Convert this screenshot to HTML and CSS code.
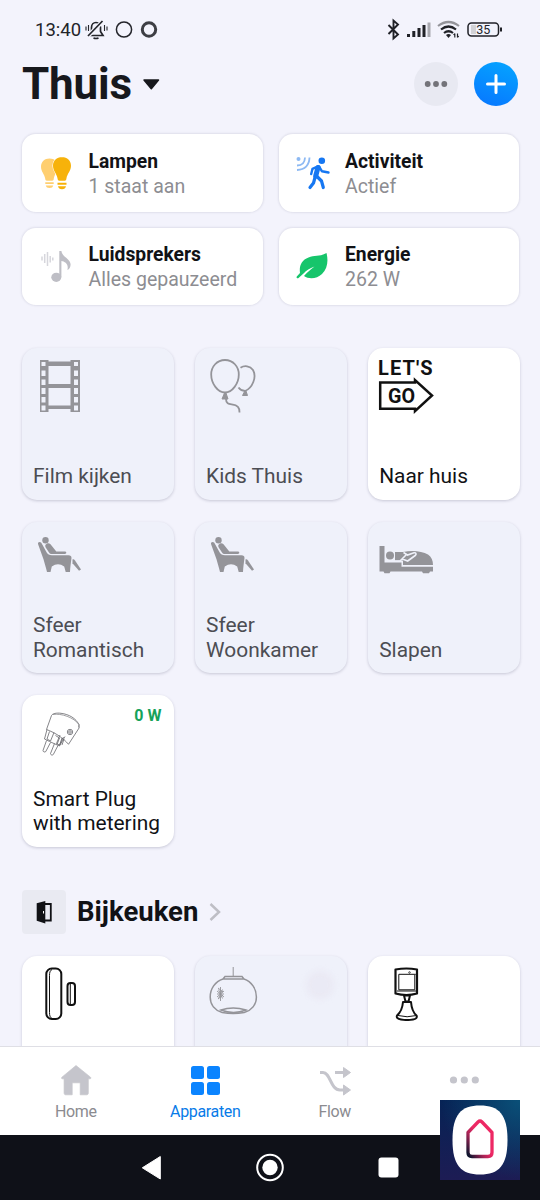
FILE: index.html
```html
<!DOCTYPE html>
<html lang="nl">
<head>
<meta charset="utf-8">
<title>Thuis</title>
<link rel="stylesheet" href="styles.css">
</head>
<body>
<div class="phone">
  <div class="status-bar">
    <span class="clock">13:40</span>
    <svg class="status-left" width="76" height="24" viewBox="84 18 76 24" fill="none" stroke="#24252b">
      <path d="M89.500 35.500h13.500l-2.500-4v-4c0-3-2-5-4.500-5s-4.500 2-4.500 5v4z" stroke-width="1.700"/>
      <path d="M86.500 37.500l17-17" stroke="#f3f3fc" stroke-width="4"/>
      <path d="M88 36l14.500-15" stroke-width="1.700"/>
      <path d="M93.500 38q2.500 1 5 0" stroke-width="1.700"/>
      <path d="M86 26.500v4M88.500 25v6M104.500 25v6M107 26.500v4" stroke-width="1.100"/>
      <circle cx="124" cy="29.500" r="7.600" stroke-width="1.500"/>
      <circle cx="149" cy="29.500" r="6.700" stroke="#3d3e44" stroke-width="3"/>
    </svg>
    <svg class="status-right" width="118" height="24" viewBox="386 18 118 24" fill="none" stroke="#202127">
      <path d="M388.500 25l9.500 9.500-4.500 4V20.500l4.500 4-9.500 9.500" stroke-width="1.900"/>
      <g stroke-width="3"><path d="M408.500 34v3M413.800 31v6M419 28v9M424 25v12"/><path d="M429 22.500V37" stroke="#a9a9b0"/></g>
      <path d="M438 26q10.500-8 21 0" stroke="#94949a" stroke-width="2.200"/>
      <path d="M441 29.500q7.500-6 15 0M444 33q4.500-3.500 9 0" stroke-width="2.200"/>
      <path d="M446 35q2.500-2 5 0l-2.500 3z" fill="#202127" stroke="none"/>
      <path d="M454.800 37.500v-4m-1.200 1.500l1.200-1.500M457.500 33.500v4m1.200-1.500l-1.200 1.500" stroke-width="1.200"/>
      <rect x="468" y="23" width="30.500" height="13" rx="3.500" stroke-width="1.500"/>
      <path d="M471 25h5v9h-5z" fill="#d2d2d7" stroke="none"/>
      <path d="M501 27.500v4" stroke-width="2"/>
      <text x="483.300" y="34" class="battery-text">35</text>
    </svg>
  </div>

  <header class="header">
    <h1 class="title">Thuis</h1>
    <svg class="caret" width="18" height="12" viewBox="142 78 18 12"><path d="M144 80h14.500l-7.200 8.700z" fill="#17181d" stroke="#17181d" stroke-width="1.500" stroke-linejoin="round"/></svg>
    <button class="round-button more" aria-label="Meer"><svg width="24" height="8" viewBox="0 0 24 8" fill="#737379"><circle cx="3.700" cy="4" r="2.900"/><circle cx="12" cy="4" r="2.900"/><circle cx="20.300" cy="4" r="2.900"/></svg></button>
    <button class="round-button add" aria-label="Toevoegen"><svg width="22" height="22" viewBox="0 0 22 22" stroke="#fff" stroke-width="3" stroke-linecap="round"><path d="M11 2.500v17M2.500 11h17"/></svg></button>
  </header>

  <main class="content">
    <section class="summary">
      <article class="summary-card">
        <svg class="summary-icon" width="36" height="36" viewBox="38 155 36 36">
          <path fill="#ffcf70" d="M49.500 158.500c-5 0-8.500 3.500-8.500 8.200 0 5 3.500 7 4.300 12.300 0 1 .6 1.700 1.500 1.700h5.400c.9 0 1.500-.7 1.500-1.700.8-5.300 4.300-7.300 4.300-12.300 0-4.700-3.500-8.200-8.500-8.200zM45.300 182.300h8.400v1.800h-8.400zM45.800 185.500h7.400q-.5 2.500-3.700 2.500t-3.700-2.500z"/>
          <path d="M62 157c-5.300 0-9 3.500-9 8.700 0 5.300 3.700 7.500 4.600 13 .1 1.300.7 2 1.600 2h5.600c.9 0 1.500-.7 1.600-2 .9-5.500 4.600-7.700 4.600-13 0-5.200-3.700-8.700-9-8.700zM57.500 182.800h9v2h-9zM58 186.300h8q-.6 3-4 3t-4-3z" fill="#f7b20a" stroke="#fff" stroke-width="1.200" paint-order="stroke"/>
        </svg>
        <div class="summary-copy"><h2>Lampen</h2><p>1 staat aan</p></div>
      </article>
      <article class="summary-card">
        <svg class="summary-icon" width="36" height="36" viewBox="294.500 155 36 36" fill="none">
          <g stroke="#8db9f3" stroke-width="1.800"><path d="M309 157.500q-.5 12-12.500 12.500M304.500 157.500q-.3 8-8 8"/></g><circle cx="298" cy="159" r="2" fill="#8db9f3"/>
          <circle cx="321.300" cy="160.700" r="3.300" fill="#1677f2"/>
          <g stroke="#1677f2" stroke-linecap="round" stroke-linejoin="round"><path d="M317.500 167.500l-2.300 8.500" stroke-width="5"/><path d="M317 166.500l-5 2.300-1.300 5.200M318.500 166.500l3 4.800 6.500 1.200" stroke-width="2.400"/><path d="M314.500 177.500l-1.500 5.500-3.500 4.500M316.500 176.500l4.500 4.500 1.800 6.500" stroke-width="3.200"/></g>
        </svg>
        <div class="summary-copy"><h2>Activiteit</h2><p>Actief</p></div>
      </article>
      <article class="summary-card">
        <svg class="summary-icon" width="36" height="36" viewBox="38 248 36 36" fill="none">
          <path d="M42 256.500v4M44.700 254v9M47.500 252v14M50.200 256v6.500M52.800 257.500v3" stroke="#d6d6dc" stroke-width="1.500"/>
          <ellipse cx="56.300" cy="277.300" rx="5" ry="4.600" fill="#bebec5"/>
          <path d="M59.300 251h2.100c.8 6 9.200 8 9.200 13.500 0 2.500-1.300 4.800-3.200 5.500 1.500-6-2.500-8.500-6-9v16h-2.100z" fill="#bebec5"/>
        </svg>
        <div class="summary-copy"><h2>Luidsprekers</h2><p>Alles gepauzeerd</p></div>
      </article>
      <article class="summary-card">
        <svg class="summary-icon" width="36" height="36" viewBox="295 248 36 36">
          <path d="M326.500 253c-5 3.500-12 2-18 4.500-7 2.500-9.500 8.500-8.500 15.500l-3 3.200c-1.200 1.600.3 2.900 1.800 1.600l4.700-4.400c3-3 6-4.900 11-6.900-4 3.200-7 5.500-10.500 9.500 5 3.500 13 2.800 18-2 5.500-5.500 6.500-13 4.500-21z" fill="#16c56b"/>
        </svg>
        <div class="summary-copy"><h2>Energie</h2><p>262 W</p></div>
      </article>
    </section>

    <section class="tiles">
      <article class="tile off">
        <svg class="tile-icon" width="54" height="54" viewBox="33 359 54 54" fill="#949499">
          <path fill-rule="evenodd" d="M40 360h40v52H40zM41.500 362v4h4v-4zm0 8.500v5.500h4v-5.500zm0 9v5.500h4v-5.500zm0 8.500v6h4v-6zm0 9v5.500h4V397zm0 8.500v5h4v-5zM74 362v4h4v-4zm0 8.500v5.500h4v-5.500zm0 9v5.500h4v-5.500zm0 8.500v6h4v-6zm0 9v5.500h4V397zm0 8.500v5h4v-5zM48.500 360v1.500h22V360zM48.500 366v18h22v-18zm0 22v17.500h22V388zm0 21v3h22v-3z"/>
        </svg>
        <h3>Film kijken</h3>
      </article>
      <article class="tile off">
        <svg class="tile-icon" width="54" height="54" viewBox="206 359 54 54" fill="none" stroke="#949499" stroke-width="1.800" stroke-linejoin="round">
          <path d="M225 360c-8 0-13.800 6.500-13.800 14.500 0 9 6.500 18 13.800 18s13.800-9 13.800-18c0-8-5.800-14.500-13.800-14.500z"/><path d="M240.500 367.800c4-2.800 9.500-2 12.500 2.200 4 7-.5 18-8 21-3 0-5-1.500-6.500-3.500"/><path d="M224.500 393l-2.500 6h6l-2-6zM244.800 391l-2.300 4.500h5l-1.500-4.500z" fill="#949499" stroke-width="1"/><path d="M226 399c0 8 8 3 12 8 1 1 1.500 3 1.500 5.500"/>
        </svg>
        <h3>Kids Thuis</h3>
      </article>
      <article class="tile">
        <svg class="tile-icon sign" width="54" height="54" viewBox="379 359 54 54">
          <text x="378" y="375" class="sign-text lets">LET'S</text>
          <path d="M380.200 382.500H415V380l17 15.500-17 15.700v-2.500h-34.800z" fill="none" stroke="#111" stroke-width="2.500"/>
          <text x="388" y="403" class="sign-text" textLength="27" lengthAdjust="spacingAndGlyphs">GO</text>
        </svg>
        <h3>Naar huis</h3>
      </article>
      <article class="tile off">
        <svg class="tile-icon" width="54" height="54" viewBox="33 533 54 54" fill="#949499">
          <circle cx="45.500" cy="540.200" r="3.200"/>
          <path d="M39.500 542c-1.300 0-1.800 1-1.400 2.300l5.400 15c1 4 2.500 8.500 3.500 12.700h3.500l1.300-5.500q6.200-4.500 12.400 0l1.500 5.500h4.300c.2-5 1-10 1.500-14 0-1.800-1-2.700-3-2.700H52c-3 0-4-1-5.300-2.800l-5.400-9.700c-.5-.6-1-.8-1.800-.8z"/>
          <path d="M46.700 543.700c-1.700.7-1.700 2.300-1 3.800l3.300 5c.8 1.100 1.500 1.500 3 1.500h12.800c2 0 2-2.400 0-2.400h-8.500l-5.800-7.300c-1-1-2.500-1.200-3.800-.6z"/>
          <path d="M72.500 559.500c1-.5 1.700 0 2.500 1l6 9-2 1.200-6.500-7.500z"/>
        </svg>
        <h3>Sfeer<br>Romantisch</h3>
      </article>
      <article class="tile off">
        <svg class="tile-icon" width="54" height="54" viewBox="33 533 54 54" fill="#949499">
          <circle cx="45.500" cy="540.200" r="3.200"/>
          <path d="M39.500 542c-1.300 0-1.800 1-1.400 2.300l5.400 15c1 4 2.500 8.500 3.500 12.700h3.500l1.300-5.500q6.200-4.500 12.400 0l1.500 5.500h4.300c.2-5 1-10 1.500-14 0-1.800-1-2.700-3-2.700H52c-3 0-4-1-5.300-2.800l-5.400-9.700c-.5-.6-1-.8-1.800-.8z"/>
          <path d="M46.700 543.700c-1.700.7-1.700 2.300-1 3.800l3.300 5c.8 1.100 1.500 1.500 3 1.500h12.800c2 0 2-2.400 0-2.400h-8.500l-5.800-7.300c-1-1-2.500-1.200-3.800-.6z"/>
          <path d="M72.500 559.500c1-.5 1.700 0 2.500 1l6 9-2 1.200-6.500-7.500z"/>
        </svg>
        <h3>Sfeer<br>Woonkamer</h3>
      </article>
      <article class="tile off">
        <svg class="tile-icon" width="54" height="54" viewBox="379 533 54 54" fill="#949499">
          <path d="M379.500 546h5v16.500h17v4.300H433v4.700h-3l-1 1.700h-6l-1-1.700h-31.500l-1 1.700h-5l-1-1.700h-4z"/>
          <circle cx="390" cy="555.500" r="4"/><path d="M395 552h8c9-2 19-1 25 2.500 3.500 2.500 5 6 5 10.500h-30v-4.500h-8z"/>
          <path d="M394 561h6l3.500-3.500 3-3M403.500 552.500l4 2.500 6.500-2.200c2-.5 2.800 1.500 1.200 2.700l-7.500 5.500-5.500-2" fill="none" stroke="#eff1fa" stroke-width="1.600"/>
        </svg>
        <h3>Slapen</h3>
      </article>
      <article class="tile">
        <svg class="tile-icon" width="54" height="54" viewBox="33 706 54 54" fill="none" stroke="#66666b" stroke-width=".8" stroke-linejoin="round">
          <path d="M46.500 729.500l5-14c1-2 5-2.800 9.500-2.200 8 1 15 5 18 11.500l.2 3-10.700 16.500c-5-6-13-11.500-22-14.800z"/><path d="M53 714.500c8-1.500 21 3 26 10l-.5 3" stroke="#88888c"/>
          <path d="M47 729.500l-2.500 9.500 5 2.500 10 4.500 5.500-9.500M49.500 731.500l-2.500 7.500 3.500 2 3.500-8.500M55.500 735.500l4 2.500-2.500 6.500M60 735l-3.500 8.500 3 1.500 4-8M62 738l-2.500 7.500M64 739l-2 6"/>
          <path d="M46.500 740.500l-3.500 10c0 1.500 2 2 2.800 1l4.700-9M54.500 743.500l-4 10c0 1.500 2 2 2.800 1l4.700-9"/>
          <circle cx="70" cy="732" r="2.700"/><circle cx="70" cy="732" r="1.300"/>
        </svg>
        <span class="power">0 W</span>
        <h3>Smart Plug<br>with metering</h3>
      </article>
    </section>

    <div class="zone">
      <span class="zone-icon"><svg width="18" height="24" viewBox="35 900.5 18 24"><path d="M36.700 903.800l8.600-2.300v22.500l-8.600-2.800z" fill="#101115"/><path d="M45 904.500h5.800v16.500H45" fill="none" stroke="#101115" stroke-width="1.800"/><path d="M43.500 911.500v2.500" stroke="#fff"/></svg></span>
      <h2>Bijkeuken</h2>
      <svg class="chevron" width="14" height="20" viewBox="0 0 14 20"><path d="M2.500 2l8.500 8-8.500 8" fill="none" stroke="#bebec5" stroke-width="2.500"/></svg>
    </div>

    <section class="tiles">
      <article class="tile">
        <svg class="tile-icon" width="54" height="54" viewBox="33 967 54 54" fill="none" stroke="#111">
          <rect x="46.300" y="968.500" width="15" height="50.500" rx="5.500" stroke-width="2"/><path d="M52 969.500c-2 1-2.500 3-2.500 6v37c0 3 .5 5 2.500 6" stroke-width="1"/>
          <rect x="67.500" y="983" width="7.500" height="22" rx="3" stroke-width="2"/><path d="M70.300 984v20" stroke-width="1"/>
        </svg>
      </article>
      <article class="tile off">
        <svg class="tile-icon" width="54" height="54" viewBox="206 967 54 54" fill="none" stroke="#949499" stroke-width="1.500">
          <path d="M233.200 967v9" stroke-width="1"/><path d="M223 979l2-2.500h17l2 2.500zM223 979c-8 2.500-12.800 10-12.800 18 0 8 5 13.500 12 15.500q11 2 22 0c7-2 12.200-7.500 12.200-15.500 0-8-4.800-15.500-12.400-18"/><path d="M221 1010q12-4 25 0-12.500 5-25 0z"/>
          <path d="M220.500 987v14M217 991l7 6M224 991l-7 6M218 988l5 4M223 995l-5 4M217 994h7M218.500 989.500l4 9M222.500 989.500l-4 9" stroke-width=".9"/>
        </svg>
        <span class="state-dot"></span>
      </article>
      <article class="tile">
        <svg class="tile-icon" width="54" height="54" viewBox="379 967 54 54" fill="none" stroke="#111" stroke-linejoin="round">
          <path d="M395.500 969.500q11-2 21.500 0v24q-10.500 3-21.500 0z" stroke-width="2.200"/><path d="M398.800 974.300h17M398.800 974.300v15.500h16v-15M397 991h19" stroke-width="1"/><circle cx="409.500" cy="972.500" r=".8" stroke-width=".7"/>
          <path d="M404 995.500l1.500 6h3l1.500-6zM403 1002h8c.5 6 2 10.500 5.500 13.500 1 2-.5 3.500-3.500 4-4 .7-8 .7-12 0-3.500-.5-4.800-2-4-4 3.500-3 5.500-7.500 6-13.500z" stroke-width="2"/><path d="M398 1015.500q9 2.500 18.500 0" stroke-width="1"/>
        </svg>
      </article>
    </section>
  </main>

  <nav class="tabs">
    <a class="tab"><svg width="34" height="34" viewBox="59 1063 34 34" fill="#c5c5cc"><path d="M76 1065.500l14.500 11.700c.7.700.4 1.600-.7 1.600H88.300v14.200c0 1.200-.6 1.800-1.800 1.800h-6.300v-12h-8v12h-6.300c-1.200 0-1.800-.6-1.800-1.800v-14.200h-1.600c-1 0-1.300-.9-.6-1.600z" stroke="#c5c5cc" stroke-width=".7"/></svg><span>Home</span></a>
    <a class="tab active"><svg width="34" height="34" viewBox="0 0 34 34" fill="#0b84ff"><rect x="3" y="3" width="13" height="13" rx="2.500"/><rect x="19" y="3" width="13" height="13" rx="2.500"/><rect x="3" y="19" width="13" height="13" rx="2.500"/><rect x="19" y="19" width="13" height="13" rx="2.500"/></svg><span>Apparaten</span></a>
    <a class="tab"><svg width="34" height="34" viewBox="318 1063 34 34" fill="none" stroke="#c5c5cc" stroke-width="3"><path d="M320 1072.500h3c7.500 0 7.500 17.500 17 17.500h4M335 1072.500h9"/><path d="M343.500 1067.500l7 5-7 5zM343.500 1085l7 5-7 5z" fill="#c5c5cc" stroke-width="1" stroke-linejoin="round"/></svg><span>Flow</span></a>
    <a class="tab"><svg width="34" height="34" viewBox="0 0 34 34" fill="#c5c5cc"><circle cx="6.500" cy="17" r="3.600"/><circle cx="17.300" cy="17" r="3.600"/><circle cx="28.300" cy="17" r="3.600"/></svg></a>
  </nav>
  <div class="system-nav">
    <svg width="270" height="32" viewBox="135 1152 270 32" fill="#fff">
      <path d="M160.300 1156.500v22.500l-18-11.200z" stroke="#fff" stroke-linejoin="round"/><circle cx="270" cy="1167.500" r="7.700"/><circle cx="270" cy="1167.500" r="12.800" fill="none" stroke="#fff" stroke-width="2"/><rect x="378.500" y="1157.500" width="20" height="20" rx="3"/>
    </svg>
  </div>
  <div class="brand-badge">
    <svg width="80" height="80" viewBox="440 1100 80 80">
      <defs><linearGradient id="brand" x1="0" y1="1" x2=".65" y2=".35"><stop offset=".05" stop-color="#10152f"/><stop offset=".5" stop-color="#a82455"/><stop offset=".8" stop-color="#ed2864"/></linearGradient></defs>
      <path d="M480 1105.500c19 0 27.500 9 27.500 34.500s-8.500 34.500-27.500 34.500-27.500-9-27.500-34.500 8.500-34.500 27.500-34.500z" fill="#fff"/>
      <path d="M468 1132.500l10-10.500q2-2 4 0l10 10.500v20q0 4-4 4h-16q-4 0-4-4z" fill="none" stroke="url(#brand)" stroke-width="3.300" stroke-linejoin="round"/>
    </svg>
  </div>
</div>
</body>
</html>
```
FILE: styles.css
```css
* { box-sizing: border-box; }
body { margin: 0; background: #f3f3fc; font-family: Roboto, sans-serif; color: #111216; }
h1, h2, h3, p { margin: 0; font-weight: 400; }
svg { display: block; flex: none; }

.phone { position: relative; display: flex; flex-direction: column; width: 540px; height: 1200px; overflow: hidden; }

.status-bar { display: flex; align-items: center; height: 60px; padding: 0 36px 0 35px; flex: none; }
.clock { width: 49px; font-size: 18.500px; color: #222329; }
.status-right { margin-left: auto; }
.battery-text { font: 400 12.500px Roboto, sans-serif; fill: #222329; stroke: none; text-anchor: middle; }

.header { display: flex; align-items: center; height: 48px; padding: 0 22px; flex: none; }
.title { width: 120px; font-size: 44px; font-weight: 700; letter-spacing: -0.200px; line-height: 48px; color: #17181d; }
.round-button { display: flex; align-items: center; justify-content: center; width: 44px; height: 44px; padding: 0; border: 0; border-radius: 50%; }
.more { margin-left: auto; background: #e8e9f2; }
.add { margin-left: 16px; background: linear-gradient(200deg, #05a6ff, #0775ff); }

.content { flex: 1; min-height: 0; padding: 26px 20px 0 22px; overflow: hidden; }
.summary { display: grid; grid-template-columns: 240.500px 240.500px; gap: 16px; }
.summary-card { display: flex; align-items: center; height: 77.500px; padding: 0 16px; background: #fff; border-radius: 14px; box-shadow: 0 0 2px 1px rgb(60 60 90 / 10%); }
.summary-copy { margin-left: 14.500px; padding-top: 2px; white-space: nowrap; }
.summary-copy h2 { font-size: 19.300px; line-height: 25px; font-weight: 700; }
.summary-copy p { font-size: 19.500px; line-height: 25px; color: #8d8d92; }

.tiles { display: grid; grid-template-columns: repeat(3, 151.500px); gap: 22px 21.600px; margin-top: 43px; }
.tile { position: relative; display: flex; flex-direction: column; justify-content: space-between; height: 151.500px; padding: 11px; border-radius: 15px; background: #fff; box-shadow: 0 1px 3px rgb(50 50 80 / 22%); }
.off { background: #eff1fa; color: #4c4d53; }
.tile h3 { font-size: 20.900px; line-height: 24.500px; white-space: nowrap; }
.power { position: absolute; top: 12px; right: 12px; font-size: 16px; line-height: 18px; font-weight: 700; color: #16a259; }
.sign { overflow: visible; }
.sign-text { font: 700 20px Roboto, sans-serif; fill: #111; }
.lets { letter-spacing: 1.100px; }
.state-dot { position: absolute; top: 15px; right: 13px; width: 28px; height: 28px; border-radius: 50%; background: rgb(225 222 234 / 35%); filter: blur(3px); }

.zone { display: flex; align-items: center; height: 44px; margin-top: 43px; }
.zone-icon { display: flex; align-items: center; justify-content: center; width: 44px; height: 44px; border-radius: 4px; background: #e9eaf2; }
.zone h2 { margin-left: 11px; font-size: 27.500px; font-weight: 700; }
.chevron { margin-left: 10px; }
.zone + .tiles { margin-top: 22px; }

.tabs { display: flex; justify-content: center; height: 89px; padding: 16px 11px 0; flex: none; background: #fff; border-top: 1px solid #dfdfe5; }
.tab { display: flex; flex-direction: column; align-items: center; width: 129.500px; font-size: 16px; letter-spacing: -0.350px; line-height: 20px; color: #8b8b90; }
.tab span { margin-top: 5px; }
.active { color: #087be8; }
.system-nav { display: flex; justify-content: center; height: 65px; padding-top: 17px; flex: none; background: #0f1118; }
.brand-badge { position: absolute; left: 440px; top: 1100px; background: radial-gradient(circle at 100% 0, #0a5078, transparent 70%), linear-gradient(#062355, #1d1c54); }
```
